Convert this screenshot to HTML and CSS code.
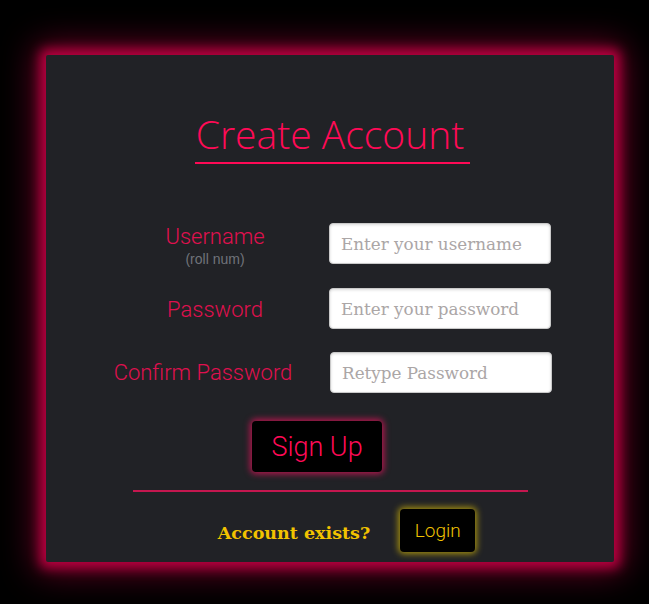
FILE: index.html
```html
<!DOCTYPE html>
<html lang="en">
<head>
<meta charset="utf-8">
<title>Create Account</title>
<link rel="stylesheet" href="styles.css">
</head>
<body>
<div class="card">
  <div class="title-wrap"><h1 class="title">Create Account</h1></div>
  <form class="form">
    <div class="row row-user">
      <div class="label">
        <span class="label-text">Username</span>
        <span class="hint">(roll num)</span>
      </div>
      <input class="field" type="text" placeholder="Enter your username">
    </div>
    <div class="row row-pass">
      <div class="label"><span class="label-text">Password</span></div>
      <input class="field" type="password" placeholder="Enter your password">
    </div>
    <div class="row row-confirm">
      <div class="label label-confirm"><span class="label-text">Confirm Password</span></div>
      <input class="field" type="password" placeholder="Retype Password">
    </div>
    <div class="actions"><button type="button" class="signup">Sign Up</button></div>
  </form>
  <div class="divider"></div>
  <div class="footer">
    <span class="exists">Account exists?</span>
    <button type="button" class="login">Login</button>
  </div>
</div>
</body>
</html>
```
FILE: styles.css
```css
html, body {
  margin: 0;
  padding: 0;
  background: #000;
}
body {
  width: 649px;
  height: 604px;
  overflow: hidden;
  font-family: "Open Sans", "Noto Sans", sans-serif;
}
.card {
  box-sizing: border-box;
  width: 568px;
  height: 507px;
  margin: 55px 0 0 46px;
  background: #212226;
  border-radius: 2px;
  box-shadow: 0 0 12px 6px #b8003f, 0 0 34px 10px #6a0026;
  padding-top: 55px;
}
.title-wrap {
  text-align: center;
  padding-left: 5px;
}
.title {
  display: inline-block;
  margin: 0;
  font-family: "Open Sans", sans-serif;
  font-weight: 300;
  font-size: 39px;
  line-height: 48px;
  color: #ff0a56;
  padding: 0 6px 4px 1px;
  border-bottom: 2px solid #ff0a56;
}
.form {
  margin-top: 59px;
  display: flex;
  flex-direction: column;
}
.row {
  display: flex;
  align-items: center;
  height: 41px;
  margin-bottom: 24px;
}
.row-pass { margin-bottom: 23px; }
.label {
  width: 283px;
  display: flex;
  flex-direction: column;
  align-items: center;
  padding-left: 55px;
  box-sizing: border-box;
}
.label-confirm {
  padding-left: 30px;
  width: 284px;
}
.row-user .label { padding-top: 3px; }
.row-pass .label { padding-top: 2px; }
.row-confirm .label { padding-top: 1px; }
.label-text {
  font-family: "Roboto", sans-serif;
  font-weight: 300;
  font-size: 22px;
  line-height: 26px;
  color: #e0104f;
}
.hint {
  font-family: "Liberation Sans", Arial, sans-serif;
  font-size: 14px;
  line-height: 16px;
  margin-top: 1px;
  color: #70737a;
}
.field {
  box-sizing: border-box;
  width: 222px;
  height: 41px;
  margin: 0;
  padding: 0 11px;
  border: 1px solid #c9c9c9;
  border-radius: 4px;
  background: #fff;
  box-shadow: inset 0 1px 3px rgba(0,0,0,0.15);
  font-family: "DejaVu Serif", "Liberation Serif", serif;
  font-size: 16.8px;
  color: #333;
  outline: none;
}
.field::placeholder { color: #aba6a6; }
.actions {
  display: flex;
  justify-content: center;
  margin-top: 4px;
  padding-right: 26px;
}
.signup {
  width: 130px;
  height: 51px;
  background: #000;
  border: none;
  border-radius: 4px;
  box-shadow: 0 0 6px 2px #b5164e;
  color: #ff0a56;
  font-family: "Roboto", sans-serif;
  font-weight: 300;
  font-size: 27px;
  padding: 0;
  cursor: pointer;
}
.divider {
  width: 395px;
  height: 2px;
  background: #c4174f;
  margin: 18px auto 0;
}
.footer {
  display: flex;
  justify-content: center;
  align-items: center;
  gap: 30px;
  margin-top: 17px;
  padding-left: 33px;
}
.exists {
  font-family: "DejaVu Serif", "Liberation Serif", serif;
  font-weight: bold;
  font-size: 17.5px;
  color: #f2c300;
  padding-top: 4px;
}
.login {
  width: 75px;
  height: 43px;
  background: #000;
  border: none;
  border-radius: 4px;
  box-shadow: 0 0 6px 2px #a08c10;
  color: #f2c300;
  font-family: "Roboto", sans-serif;
  font-weight: 300;
  font-size: 19px;
  padding: 0;
  cursor: pointer;
}
```
